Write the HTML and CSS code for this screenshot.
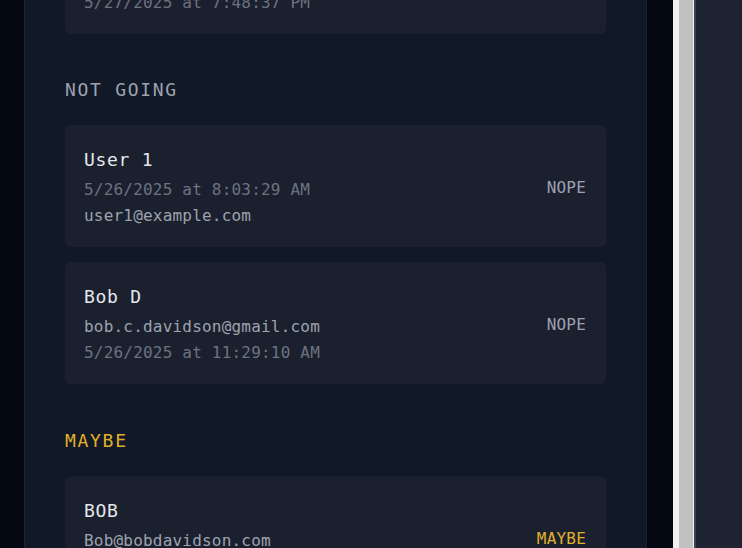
FILE: index.html
```html
<!DOCTYPE html>
<html>
<head>
<meta charset="utf-8">
<link rel="stylesheet" href="styles.css">
</head>
<body>
<div class="gutter"></div>
<main class="panel">
  <div class="card card-partial">
    <div class="info">
      <div class="meta">5/27/2025 at 7:48:37 PM</div>
    </div>
  </div>

  <h2 class="section-title">NOT GOING</h2>
  <div class="card">
    <div class="info">
      <div class="name">User 1</div>
      <div class="meta">5/26/2025 at 8:03:29 AM</div>
      <div class="email">user1@example.com</div>
    </div>
    <span class="badge">NOPE</span>
  </div>
  <div class="card">
    <div class="info">
      <div class="name">Bob D</div>
      <div class="email">bob.c.davidson@gmail.com</div>
      <div class="meta">5/26/2025 at 11:29:10 AM</div>
    </div>
    <span class="badge">NOPE</span>
  </div>

  <h2 class="section-title maybe">MAYBE</h2>
  <div class="card">
    <div class="info">
      <div class="name">BOB</div>
      <div class="email">Bob@bobdavidson.com</div>
      <div class="meta">5/26/2025 at 9:12:44 AM</div>
    </div>
    <span class="badge maybe">MAYBE</span>
  </div>
</main>
<div class="gap"></div>
<div class="scrollbar"><div class="thumb"></div></div>
<div class="side"></div>
</body>
</html>
```

FILE: styles.css
```css
html, body {
  margin: 0;
  padding: 0;
  height: 548px;
  overflow: hidden;
}
body {
  display: flex;
  background: #030712;
  font-family: "DejaVu Sans Mono", "Liberation Mono", monospace;
  font-size: 16px;
  letter-spacing: 0.2px;
}
.gutter {
  width: 24px;
  flex: none;
}
.panel {
  width: 623px;
  box-sizing: border-box;
  flex: none;
  background: #111827;
  border-left: 1px solid #1c2330;
  border-right: 1px solid #1c2330;
  padding: 0 40px;
  display: flex;
  flex-direction: column;
}
.card {
  background: #1b202e;
  border-radius: 6px;
  padding: 21px 20px 18px 19px;
  display: flex;
  align-items: center;
  justify-content: space-between;
  margin-bottom: 15px;
}
.card-partial {
  margin-top: -31px;
  margin-bottom: 0;
}
.info {
  display: flex;
  flex-direction: column;
}
.name {
  font-size: 18px;
  line-height: 28px;
  letter-spacing: 0.7px;
  color: #e5e7eb;
  margin-bottom: 3px;
}
.meta, .email {
  line-height: 26px;
}
.meta {
  color: #6b7280;
}
.email {
  color: #9ca3af;
}
.badge {
  color: #9ca3af;
  font-size: 16px;
  line-height: 20px;
  letter-spacing: 0.2px;
}
.badge.maybe {
  color: #e0b02a;
}
.section-title {
  margin: 42px 0 21px;
  font-size: 18px;
  line-height: 28px;
  font-weight: normal;
  letter-spacing: 1.7px;
  color: #9ca3af;
}
.section-title.maybe {
  color: #e0b02a;
  margin-top: 28px;
}
.gap {
  width: 26px;
  flex: none;
}
.scrollbar {
  width: 21px;
  flex: none;
  box-sizing: border-box;
  background: #f1f1f1;
  padding: 0 1px 0 6px;
  display: flex;
}
.thumb {
  flex: 1;
  background: #c1c1c1;
}
.side {
  flex: 1;
  background: #1f2433;
  border-left: 2px solid #3a4152;
}
```
